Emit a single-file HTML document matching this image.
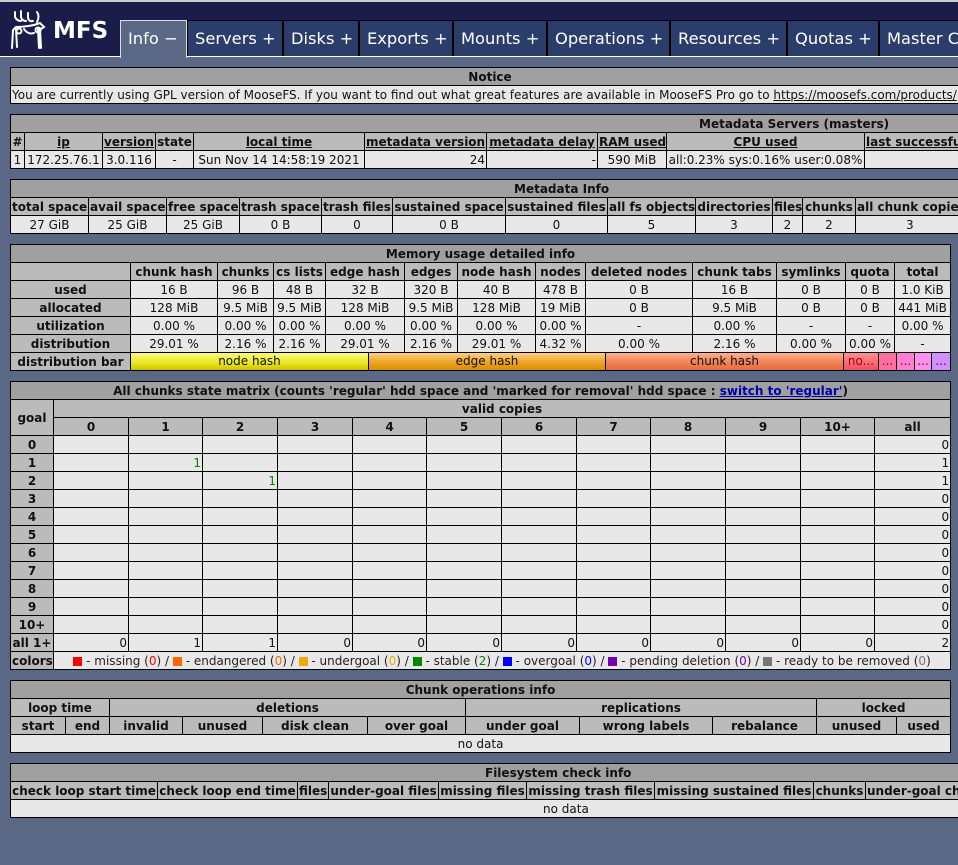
<!DOCTYPE html>
<html><head><meta charset="utf-8"><style>
html,body{margin:0;padding:0}
body{width:958px;height:865px;overflow:hidden;background:#5a6886;font-family:"DejaVu Sans","Liberation Sans",sans-serif;font-size:12px;color:#111;position:relative}
#top{position:absolute;left:0;top:0;width:958px;height:2px;background:#ccc}
#hdr{position:absolute;left:0;top:2px;width:958px;height:54px;background:#1a1d4a}
#wline{position:absolute;left:0;top:56px;width:958px;height:1px;background:#fff}
.tab{position:absolute;top:20px;height:36px;background:#2b3d6b;color:#fff;font-size:16.3px;line-height:36px;border:1px solid #000;border-bottom:none;box-sizing:border-box;padding-left:7px;white-space:nowrap;overflow:hidden}
.tab.act{background:#5a6886;border:1px solid #ddd;border-bottom:none;height:38px;z-index:2}
table{position:absolute;left:10px;border-collapse:collapse;table-layout:fixed}
td,th{border:1px solid #000;height:17px;line-height:16px;padding:1px 1px 0 1px;box-sizing:border-box;white-space:nowrap;overflow:hidden;font-size:12px}
th{background:#bbb;font-weight:bold;text-align:center}
th.t{background:#a0a0a0}
td{background:#e8e8e8;text-align:center}
td.r{text-align:right}
td.l{text-align:left}
th u{text-decoration:underline}
a{color:#00a}
.sq{display:inline-block;width:9px;height:9px;vertical-align:-1px}
</style></head><body>
<div id="top"></div>
<div id="hdr"></div>
<div id="wline"></div>
<svg style="position:absolute;left:10px;top:7px" width="110" height="44" viewBox="0 0 110 44">
<g stroke="#fff" stroke-width="2" fill="none" stroke-linecap="round">
<path d="M5 5v5q2 4 6 4 M11 4v6q1 4 5 4 M18 6v5q1 4 5 3 M27 5q3 4 0 10 M24 18l6-2 4 4-3 2"/>
<path d="M24 18q-10 2-18 2l-3 3-1 18 M6 22l1 18 M28 22l1 19 M30 22l1 19 M14 22q4 6 10 4"/>
<circle cx="9" cy="24" r="2.5"/><circle cx="28" cy="23" r="2.5"/>
</g>
<text x="43" y="31" fill="#fff" font-family="DejaVu Sans" font-weight="bold" font-size="23">MFS</text>
</svg>
<div class="tab act" style="left:120px;width:67px">Info −</div>
<div class="tab" style="left:187px;width:96px">Servers +</div>
<div class="tab" style="left:283px;width:76px">Disks +</div>
<div class="tab" style="left:359px;width:94px">Exports +</div>
<div class="tab" style="left:453px;width:94px">Mounts +</div>
<div class="tab" style="left:547px;width:123px">Operations +</div>
<div class="tab" style="left:670px;width:117px">Resources +</div>
<div class="tab" style="left:787px;width:92px">Quotas +</div>
<div class="tab" style="left:879px;width:90px">Master Charts</div>

<table style="top:67px;width:960px"><tr><th class="t">Notice</th></tr>
<tr><td class="l">You are currently using GPL version of MooseFS. If you want to find out what great features are available in MooseFS Pro go to <span style="text-decoration:underline">https://moosefs.com/products/</span></td></tr></table>

<table style="top:114px;width:1110px">
<colgroup><col style="width:14px"><col style="width:78px"><col style="width:53px"><col style="width:38px"><col style="width:171px"><col style="width:122px"><col style="width:111px"><col style="width:69px"><col style="width:198px"><col style="width:256px"></colgroup>
<tr><th class="t" colspan="10" style="text-align:left;padding-left:688px">Metadata Servers (masters)</th></tr>
<tr><th>#</th><th><u>ip</u></th><th><u>version</u></th><th>state</th><th><u>local time</u></th><th><u>metadata version</u></th><th><u>metadata delay</u></th><th><u>RAM used</u></th><th><u>CPU used</u></th><th style="text-align:left"><u>last successful store</u></th></tr>
<tr><td>1</td><td>172.25.76.1</td><td>3.0.116</td><td>-</td><td>Sun Nov 14 14:58:19 2021</td><td class="r">24</td><td class="r">-</td><td>590 MiB</td><td>all:0.23% sys:0.16% user:0.08%</td><td></td></tr></table>

<table style="top:179px;width:1000px">
<colgroup><col style="width:78px"><col style="width:78px"><col style="width:73px"><col style="width:82px"><col style="width:71px"><col style="width:113px"><col style="width:102px"><col style="width:88px"><col style="width:77px"><col style="width:30px"><col style="width:53px"><col style="width:155px"></colgroup>
<tr><th class="t" colspan="12" style="text-align:left;padding-left:503px">Metadata Info</th></tr>
<tr><th>total space</th><th>avail space</th><th>free space</th><th>trash space</th><th>trash files</th><th>sustained space</th><th>sustained files</th><th>all fs objects</th><th>directories</th><th>files</th><th>chunks</th><th style="text-align:left">all chunk copies</th></tr>
<tr><td>27 GiB</td><td>25 GiB</td><td>25 GiB</td><td>0 B</td><td>0</td><td>0 B</td><td>0</td><td>5</td><td>3</td><td>2</td><td>2</td><td style="text-align:left;padding-left:50px">3</td></tr></table>

<table style="top:244px;width:940px">
<colgroup><col style="width:120px"><col style="width:87px"><col style="width:56px"><col style="width:52px"><col style="width:79px"><col style="width:53px"><col style="width:78px"><col style="width:50px"><col style="width:107px"><col style="width:84px"><col style="width:69px"><col style="width:49px"><col style="width:56px"></colgroup>
<tr><th class="t" colspan="13">Memory usage detailed info</th></tr>
<tr><th></th><th>chunk hash</th><th>chunks</th><th>cs lists</th><th>edge hash</th><th>edges</th><th>node hash</th><th>nodes</th><th>deleted nodes</th><th>chunk tabs</th><th>symlinks</th><th>quota</th><th>total</th></tr>
<tr><th>used</th><td>16 B</td><td>96 B</td><td>48 B</td><td>32 B</td><td>320 B</td><td>40 B</td><td>478 B</td><td>0 B</td><td>16 B</td><td>0 B</td><td>0 B</td><td>1.0 KiB</td></tr>
<tr><th>allocated</th><td>128 MiB</td><td>9.5 MiB</td><td>9.5 MiB</td><td>128 MiB</td><td>9.5 MiB</td><td>128 MiB</td><td>19 MiB</td><td>0 B</td><td>9.5 MiB</td><td>0 B</td><td>0 B</td><td>441 MiB</td></tr>
<tr><th>utilization</th><td>0.00 %</td><td>0.00 %</td><td>0.00 %</td><td>0.00 %</td><td>0.00 %</td><td>0.00 %</td><td>0.00 %</td><td>-</td><td>0.00 %</td><td>-</td><td>-</td><td>0.00 %</td></tr>
<tr><th>distribution</th><td>29.01 %</td><td>2.16 %</td><td>2.16 %</td><td>29.01 %</td><td>2.16 %</td><td>29.01 %</td><td>4.32 %</td><td>0.00 %</td><td>2.16 %</td><td>0.00 %</td><td>0.00 %</td><td>-</td></tr>
<tr><th>distribution bar</th><td colspan="12" style="padding:0">
<div style="display:flex;height:17px;line-height:17px">
<div style="width:237px;background:linear-gradient(#fafa80,#e8e820 60%,#d0c000);border-right:1px solid #000">node hash</div>
<div style="width:236px;background:linear-gradient(#fcd080,#eca020 60%,#d89000);border-right:1px solid #000">edge hash</div>
<div style="width:237px;background:linear-gradient(#ffb090,#f08050 60%,#e07040);border-right:1px solid #000">chunk hash</div>
<div style="width:34px;background:linear-gradient(#ff9090,#f05060);border-right:1px solid #000;color:#a00">no...</div>
<div style="width:17px;background:#ff70a0;border-right:1px solid #000;color:#a00">...</div>
<div style="width:17px;background:#ff80d0;border-right:1px solid #000;color:#a00">...</div>
<div style="width:16px;background:#ff90f0;border-right:1px solid #000;color:#a00">...</div>
<div style="flex:1;background:#d090ff;color:#606">...</div>
</div></td></tr></table>

<table style="top:381px;width:940px">
<colgroup><col style="width:43px"><col style="width:75px"><col style="width:74px"><col style="width:75px"><col style="width:75px"><col style="width:74px"><col style="width:75px"><col style="width:75px"><col style="width:74px"><col style="width:75px"><col style="width:75px"><col style="width:74px"><col style="width:76px"></colgroup>
<tr><th class="t" colspan="13">All chunks state matrix (counts 'regular' hdd space and 'marked for removal' hdd space : <a href="#"><u>switch to 'regular'</u></a>)</th></tr>
<tr><th rowspan="2">goal</th><th colspan="12">valid copies</th></tr>
<tr><th>0</th><th>1</th><th>2</th><th>3</th><th>4</th><th>5</th><th>6</th><th>7</th><th>8</th><th>9</th><th>10+</th><th>all</th></tr>
<tr><th>0</th><td></td><td></td><td></td><td></td><td></td><td></td><td></td><td></td><td></td><td></td><td></td><td class="r">0</td></tr>
<tr><th>1</th><td></td><td class="r" style="color:#080">1</td><td></td><td></td><td></td><td></td><td></td><td></td><td></td><td></td><td></td><td class="r">1</td></tr>
<tr><th>2</th><td></td><td></td><td class="r" style="color:#080">1</td><td></td><td></td><td></td><td></td><td></td><td></td><td></td><td></td><td class="r">1</td></tr>
<tr><th>3</th><td></td><td></td><td></td><td></td><td></td><td></td><td></td><td></td><td></td><td></td><td></td><td class="r">0</td></tr>
<tr><th>4</th><td></td><td></td><td></td><td></td><td></td><td></td><td></td><td></td><td></td><td></td><td></td><td class="r">0</td></tr>
<tr><th>5</th><td></td><td></td><td></td><td></td><td></td><td></td><td></td><td></td><td></td><td></td><td></td><td class="r">0</td></tr>
<tr><th>6</th><td></td><td></td><td></td><td></td><td></td><td></td><td></td><td></td><td></td><td></td><td></td><td class="r">0</td></tr>
<tr><th>7</th><td></td><td></td><td></td><td></td><td></td><td></td><td></td><td></td><td></td><td></td><td></td><td class="r">0</td></tr>
<tr><th>8</th><td></td><td></td><td></td><td></td><td></td><td></td><td></td><td></td><td></td><td></td><td></td><td class="r">0</td></tr>
<tr><th>9</th><td></td><td></td><td></td><td></td><td></td><td></td><td></td><td></td><td></td><td></td><td></td><td class="r">0</td></tr>
<tr><th>10+</th><td></td><td></td><td></td><td></td><td></td><td></td><td></td><td></td><td></td><td></td><td></td><td class="r">0</td></tr>
<tr><th>all 1+</th><td class="r">0</td><td class="r">1</td><td class="r">1</td><td class="r">0</td><td class="r">0</td><td class="r">0</td><td class="r">0</td><td class="r">0</td><td class="r">0</td><td class="r">0</td><td class="r">0</td><td class="r">2</td></tr>
<tr><th>colors</th><td colspan="12" style="color:#222"><span class="sq" style="background:#f00"></span> - missing (<span style="color:#f00">0</span>) / <span class="sq" style="background:#f60"></span> - endangered (<span style="color:#f60">0</span>) / <span class="sq" style="background:#ea0"></span> - undergoal (<span style="color:#ea0">0</span>) / <span class="sq" style="background:#080"></span> - stable (<span style="color:#080">2</span>) / <span class="sq" style="background:#00f"></span> - overgoal (<span style="color:#00f">0</span>) / <span class="sq" style="background:#70a"></span> - pending deletion (<span style="color:#70a">0</span>) / <span class="sq" style="background:#777"></span> - ready to be removed (<span style="color:#777">0</span>)</td></tr>
</table>

<table style="top:680px;width:940px">
<colgroup><col style="width:55px"><col style="width:44px"><col style="width:73px"><col style="width:80px"><col style="width:105px"><col style="width:98px"><col style="width:114px"><col style="width:133px"><col style="width:104px"><col style="width:80px"><col style="width:54px"></colgroup>
<tr><th class="t" colspan="11">Chunk operations info</th></tr>
<tr><th colspan="2">loop time</th><th colspan="4">deletions</th><th colspan="3">replications</th><th colspan="2">locked</th></tr>
<tr><th>start</th><th>end</th><th>invalid</th><th>unused</th><th>disk clean</th><th>over goal</th><th>under goal</th><th>wrong labels</th><th>rebalance</th><th>unused</th><th>used</th></tr>
<tr><td colspan="11">no data</td></tr></table>

<table style="top:763px;width:1100px">
<colgroup><col style="width:147px"><col style="width:140px"><col style="width:31px"><col style="width:110px"><col style="width:88px"><col style="width:128px"><col style="width:159px"><col style="width:52px"><col style="width:245px"></colgroup>
<tr><th class="t" colspan="9" style="text-align:left;padding-left:474px">Filesystem check info</th></tr>
<tr><th>check loop start time</th><th>check loop end time</th><th>files</th><th>under-goal files</th><th>missing files</th><th>missing trash files</th><th>missing sustained files</th><th>chunks</th><th style="text-align:left">under-goal chunks</th></tr>
<tr><td colspan="9" style="text-align:left;padding-left:532px">no data</td></tr></table>
</body></html>
